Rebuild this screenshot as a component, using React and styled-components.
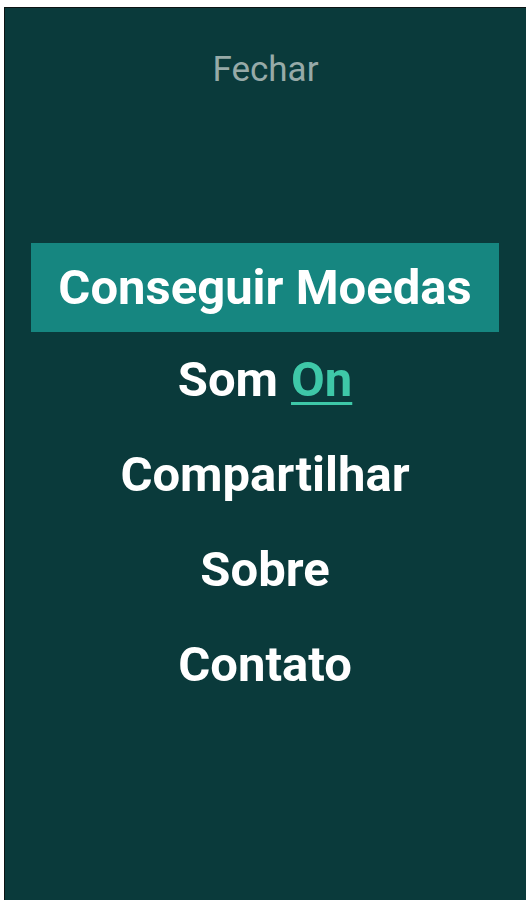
import styled, { createGlobalStyle } from "styled-components";

const GlobalStyle = createGlobalStyle`
  html, body {
    margin: 0;
    padding: 0;
    background: #ffffff;
  }
  body {
    font-family: Roboto, "Noto Sans", "Liberation Sans", sans-serif;
  }
`;

const Page = styled.div`
  padding: 7px 0 0 4px;
  height: 900px;
  box-sizing: border-box;
`;

const Panel = styled.div`
  height: 100%;
  box-sizing: border-box;
  background-color: #0a3a3b;
  border-top: 1px solid #0c1414;
  border-left: 1px solid #0c1414;
  display: flex;
  flex-direction: column;
  align-items: center;
`;

const Close = styled.div`
  margin-top: 41px;
  font-size: 35px;
  line-height: 42px;
  color: #97aaa8;
  cursor: pointer;
`;

const Menu = styled.ul`
  list-style: none;
  margin: 152px 0 0;
  padding: 0;
  width: 100%;
  display: flex;
  flex-direction: column;
  align-items: center;
`;

const Item = styled.li`
  box-sizing: border-box;
  width: calc(100% - 53px);
  margin-left: -1px;
  height: ${(p) => (p.$active ? "89px" : "95px")};
  display: flex;
  align-items: center;
  justify-content: center;
  font-size: 49px;
  font-weight: 700;
  color: #ffffff;
  background-color: ${(p) => (p.$active ? "#168680" : "transparent")};
  cursor: pointer;
`;

const Toggle = styled.span`
  margin-left: 13px;
  color: #3ec8a8;
  text-decoration: underline;
  text-decoration-thickness: 3px;
  text-underline-offset: 6px;
`;

export default function App() {
  return (
    <>
      <GlobalStyle />
      <Page>
        <Panel>
          <Close>Fechar</Close>
          <Menu>
            <Item $active>Conseguir Moedas</Item>
            <Item>
              Som<Toggle>On</Toggle>
            </Item>
            <Item>Compartilhar</Item>
            <Item>Sobre</Item>
            <Item>Contato</Item>
          </Menu>
        </Panel>
      </Page>
    </>
  );
}
